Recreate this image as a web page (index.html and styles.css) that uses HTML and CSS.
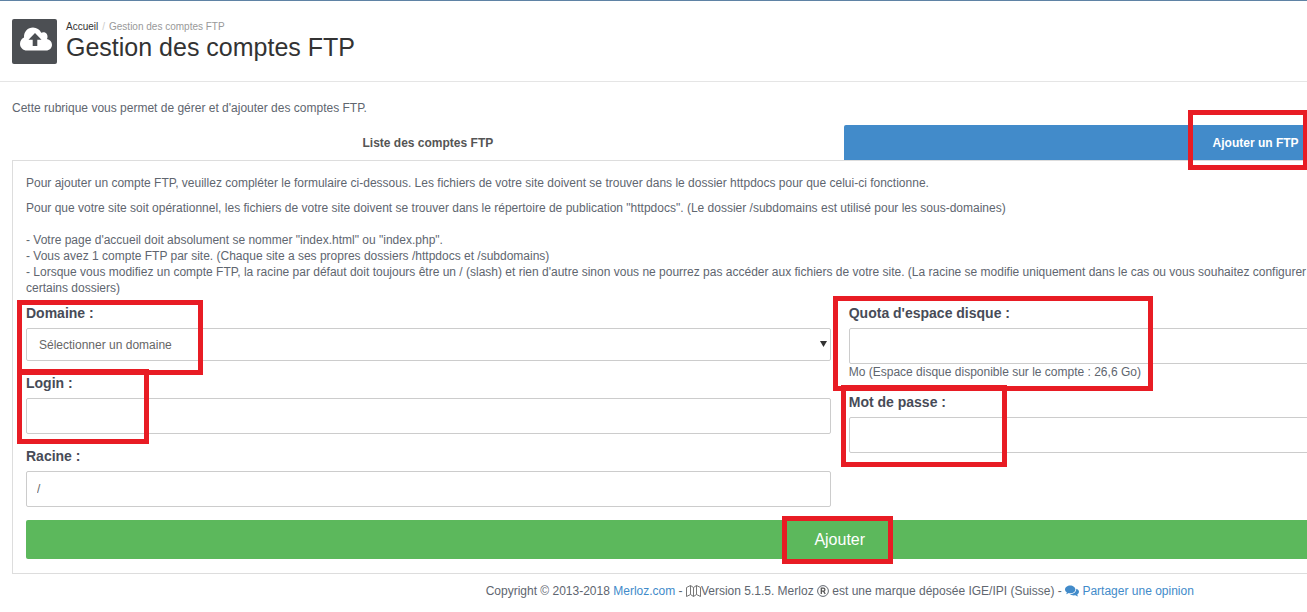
FILE: index.html
```html
<!DOCTYPE html>
<html lang="fr">
<head>
<meta charset="utf-8">
<title>Gestion des comptes FTP</title>
<link rel="stylesheet" href="styles.css">
</head>
<body>
<div class="page">
  <header class="page-header">
    <div class="page-icon">
      <svg width="34" height="26" viewBox="0 0 34 26" aria-hidden="true">
        <path fill="#fff" d="M8 24.500C4 24.500 1 21.500 1 17.700c0-2.800 1.600-5.200 4-6.300C4.800 5.500 8.800 1.500 14 1.500c3.700 0 6.800 2.100 8.200 5.300 3-1.600 6.800.6 6.300 4.400-.1.700-.3 1.300-.6 1.800 3 .6 5.100 2.900 5.100 5.700 0 3.300-2.600 5.800-5.900 5.800z"/>
        <path fill="#4c4f53" d="M16 7l6.500 6.800h-4.200v6.200h-4.600v-6.200H9.500z"/>
      </svg>
    </div>
    <div class="page-heading">
      <nav class="breadcrumb"><a href="#">Accueil</a><span class="separator">/</span><span>Gestion des comptes FTP</span></nav>
      <h1>Gestion des comptes FTP</h1>
    </div>
  </header>

  <main class="content">
    <p class="intro">Cette rubrique vous permet de gérer et d'ajouter des comptes FTP.</p>
    <div class="tabs" role="tablist">
      <button class="tab" type="button" role="tab">Liste des comptes FTP</button>
      <button class="tab tab-active" type="button" role="tab" aria-selected="true"><span class="marked">Ajouter un FTP<span class="mark mark-tab"></span></span></button>
    </div>
    <section class="panel">
      <p>Pour ajouter un compte FTP, veuillez compléter le formulaire ci-dessous. Les fichiers de votre site doivent se trouver dans le dossier httpdocs pour que celui-ci fonctionne.</p>
      <p>Pour que votre site soit opérationnel, les fichiers de votre site doivent se trouver dans le répertoire de publication "httpdocs". (Le dossier /subdomains est utilisé pour les sous-domaines)<br><br>- Votre page d'accueil doit absolument se nommer "index.html" ou "index.php".<br>- Vous avez 1 compte FTP par site. (Chaque site a ses propres dossiers /httpdocs et /subdomains)<br>- Lorsque vous modifiez un compte FTP, la racine par défaut doit toujours être un / (slash) et rien d'autre sinon vous ne pourrez pas accéder aux fichiers de votre site. (La racine se modifie uniquement dans le cas ou vous souhaitez configurer des comptes FTP pour<br>certains dossiers)</p>
      <form class="form">
        <div class="columns">
          <div class="column">
            <div class="field">
              <label for="domain">Domaine :</label>
              <div class="select-box">
                <select id="domain"><option>Sélectionner un domaine</option></select>
                <svg class="arrow" width="7" height="6" viewBox="0 0 7 6" aria-hidden="true"><path fill="#333" d="M0 0h7L3.500 6z"/></svg>
              </div>
              <span class="mark mark-domain"></span>
            </div>
            <div class="field">
              <label for="login">Login :</label>
              <input id="login" type="text">
              <span class="mark mark-login"></span>
            </div>
            <div class="field">
              <label for="root">Racine :</label>
              <input id="root" type="text" value="/">
            </div>
          </div>
          <div class="column">
            <div class="field">
              <label for="quota">Quota d'espace disque :</label>
              <input id="quota" type="text">
              <div class="help">Mo (Espace disque disponible sur le compte : 26,6 Go)</div>
              <span class="mark mark-quota"></span>
            </div>
            <div class="field">
              <label for="password">Mot de passe :</label>
              <input id="password" type="password">
              <span class="mark mark-password"></span>
            </div>
          </div>
        </div>
        <button class="submit" type="submit"><span class="marked">Ajouter<span class="mark mark-submit"></span></span></button>
      </form>
    </section>
  </main>

  <footer class="footer">Copyright © 2013-2018 <a href="#">Merloz.com</a> -
    <svg width="15" height="12" viewBox="0 0 15 12" aria-hidden="true"><path fill="none" stroke="#777" d="M.5 2.500l4-2 3 2 3-2 4 2v9l-4-2-3 2-3-2-4 2zM4.500.5v9M7.500 2.500v9M10.500.5v9"/></svg>Version 5.1.5. Merloz <svg width="12" height="12" viewBox="0 0 12 12" role="img" aria-label="Marque déposée"><circle cx="6" cy="6" r="5.400" fill="none" stroke="#60666f"/><path fill="none" stroke="#555" stroke-width="1.300" d="M4.300 9V3.200h2.100a1.500 1.500 0 0 1 0 3H4.300M6.500 6.200L8.200 9"/></svg> est une marque déposée IGE/IPI (Suisse) -
    <a href="#"><svg width="14" height="12" viewBox="0 0 14 12" aria-hidden="true"><path fill="#428bca" d="M5.200.5C8 .5 10.400 2.200 10.400 4.500S8 8.300 5.200 8.300c-.5 0-1-.1-1.500-.2C2.900 8.700 1.900 9.100.9 9.200c.5-.5.900-1.100 1-1.800C.7 6.700 0 5.700 0 4.500 0 2.200 2.400.5 5.200.5z"/><path fill="#428bca" d="M11.300 3.700c1.600.6 2.700 1.700 2.700 3.100 0 1.100-.7 2.100-1.800 2.800.1.700.5 1.300 1 1.800-1-.1-2-.5-2.800-1.100-2.400.4-4.500-.2-5.600-1.300 3.600.1 6.500-1.900 6.500-5.300z"/></svg> Partager une opinion</a></footer>
</div>
</body>
</html>
```
FILE: styles.css
```css
* { box-sizing: border-box; }

body {
  margin: 0;
  overflow: hidden;
  background: #fff;
  color: #60666f;
  font: 12px/16px "Liberation Sans", Arial, sans-serif;
}

/* The page is wider than the window; the right side runs past its edge. */
.page {
  width: 128.5%;
  border-top: 1px solid #5f83a5;
}

p, h1 { margin: 0; }
a { color: #428bca; text-decoration: none; }

.page-header {
  display: flex;
  gap: 9px;
  padding: 18px 12px 17px;
  border-bottom: 1px solid #e5e5e5;
}

.page-icon {
  display: flex;
  justify-content: center;
  width: 45px;
  height: 45px;
  padding: 7px 0 0 3px;
  border-radius: 2px;
  background: #4c4f53;
}

.breadcrumb {
  color: #999;
  font-size: 10px;
  line-height: 16px;
}
.breadcrumb a { color: #333; }
.separator { padding: 0 4px; color: #ccc; }

h1 {
  color: #333;
  font-size: 25px;
  font-weight: 400;
  line-height: 24px;
}

.content { padding: 18px 12px 0; }
.intro { margin-bottom: 9px; }

.tabs {
  display: grid;
  grid-template-columns: 832fr 824fr;
}
.tab {
  height: 35px;
  padding: 0;
  border: 0;
  border-radius: 2px 2px 0 0;
  background: transparent;
  color: #555;
  font: bold 12px/16px "Liberation Sans", Arial, sans-serif;
}
.tab-active { background: #428bca; color: #fff; }

.panel {
  padding: 14px 13px;
  border: 1px solid #ddd;
}
.panel p { margin-bottom: 9px; }
.panel p + p { margin-bottom: 7px; }

.columns {
  display: grid;
  grid-template-columns: 1fr 1fr;
  gap: 18px;
}
.column {
  display: flex;
  flex-direction: column;
  gap: 12px;
}
.field { position: relative; }
.field label {
  display: block;
  margin-bottom: 5px;
  color: #474b57;
  font-size: 14px;
  font-weight: 700;
  line-height: 20px;
}
.field input,
.field select {
  display: block;
  width: 100%;
  height: 36px;
  padding: 0 10px;
  border: 1px solid #ccc;
  border-radius: 2px;
  background: #fff;
  color: #666;
  font: 12px/16px "Liberation Sans", Arial, sans-serif;
}
.field select {
  height: 33px;
  padding: 0 12px;
  appearance: none;
}
.select-box { position: relative; }
.arrow {
  position: absolute;
  top: 13px;
  right: 4px;
}

.submit {
  display: block;
  width: 100%;
  height: 39px;
  margin-top: 13px;
  border: 0;
  border-radius: 2px;
  background: #5cb85c;
  color: #fff;
  font: 16px/20px "Liberation Sans", Arial, sans-serif;
}

.footer {
  padding-top: 9px;
  text-align: center;
}
.footer svg { vertical-align: -2px; }

/* Highlight frames drawn over the controls */
.marked { position: relative; }
.mark {
  position: absolute;
  border: 5px solid #e81c24;
  pointer-events: none;
}
.mark-tab { top: -26px; left: -25px; width: 120px; height: 60px; }
.mark-domain { top: -3px; left: -9px; width: 186px; height: 75px; }
.mark-login { top: -4px; left: -9px; width: 132px; height: 75px; }
.mark-quota { top: -7px; left: -16px; width: 320px; height: 95px; }
.mark-password { top: -7px; left: -8px; width: 166px; height: 82px; }
.mark-submit { top: -15px; left: -32px; width: 111px; height: 48px; }
```
